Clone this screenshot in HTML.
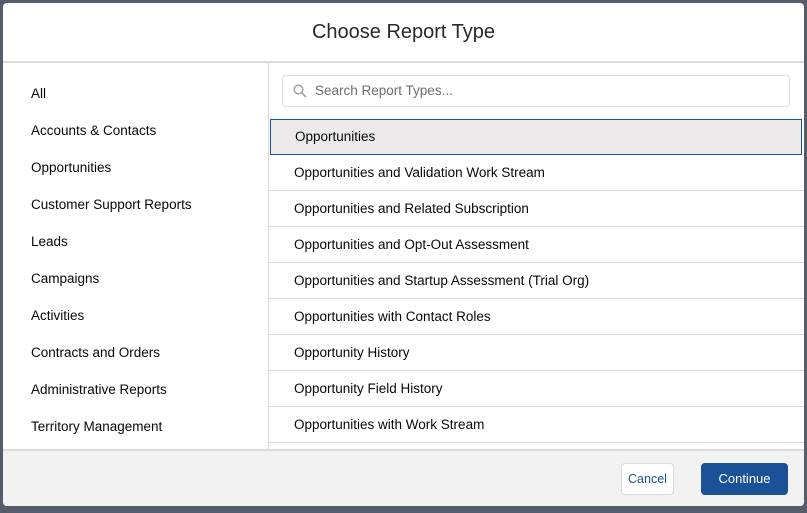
<!DOCTYPE html>
<html><head><style>
*{box-sizing:border-box;margin:0;padding:0}
body{width:807px;height:513px;background:#545d69;font-family:"Liberation Sans",sans-serif;color:#080707;position:relative;overflow:hidden}
.modal{position:absolute;left:3px;top:3px;width:801px;height:503px;background:#fff;border-radius:4px;overflow:hidden}
.hdr{height:60px;border-bottom:2px solid #dddbda;text-align:center;font-size:20px;line-height:58px;color:#2b2826}
.left{position:absolute;left:0;top:60px;width:266px;height:388px;border-right:1px solid #dddbda}
.left div{position:absolute;left:28px;font-size:13.5px}
.right{position:absolute;left:266px;top:60px;width:535px;height:388px;overflow:hidden}
.search{position:absolute;left:13px;top:12px;width:508px;height:32px;border:1px solid #dddbda;border-radius:4px;font-size:13.5px;color:#706e6b;line-height:30px;padding-left:32px}
.search svg{position:absolute;left:10px;top:8px}
.row{position:absolute;left:0;width:535px;height:36px;border-bottom:1px solid #dddbda;font-size:13.5px;line-height:35px;padding-left:25px}
.sel{background:#ecebea;border:1px solid #1b5297;left:1px;width:532px;padding-left:24px;line-height:33px}
.ftr{position:absolute;left:0;top:446px;width:801px;height:57px;background:#f3f2f2;border-top:2px solid #dddbda}
.btn{position:absolute;top:12px;height:32px;border-radius:4px;font-size:13px;line-height:30px;text-align:center}
</style></head><body>
<div class="modal">
<div class="hdr">Choose Report Type</div>
<div class="left">
<div style="top:23px">All</div>
<div style="top:60px">Accounts &amp; Contacts</div>
<div style="top:97px">Opportunities</div>
<div style="top:134px">Customer Support Reports</div>
<div style="top:171px">Leads</div>
<div style="top:208px">Campaigns</div>
<div style="top:245px">Activities</div>
<div style="top:282px">Contracts and Orders</div>
<div style="top:319px">Administrative Reports</div>
<div style="top:356px">Territory Management</div>
</div>
<div class="right">
<div class="search"><svg width="14" height="14" viewBox="0 0 14 14"><circle cx="5.5" cy="5.5" r="4.3" fill="none" stroke="#a8a6a4" stroke-width="1.6"/><path d="M8.7 8.7L13 13" stroke="#a8a6a4" stroke-width="1.8"/></svg>Search Report Types...</div>
<div class="row sel" style="top:56px">Opportunities</div>
<div class="row" style="top:92px">Opportunities and Validation Work Stream</div>
<div class="row" style="top:128px">Opportunities and Related Subscription</div>
<div class="row" style="top:164px">Opportunities and Opt-Out Assessment</div>
<div class="row" style="top:200px">Opportunities and Startup Assessment (Trial Org)</div>
<div class="row" style="top:236px">Opportunities with Contact Roles</div>
<div class="row" style="top:272px">Opportunity History</div>
<div class="row" style="top:308px">Opportunity Field History</div>
<div class="row" style="top:344px">Opportunities with Work Stream</div>
</div>
<div class="ftr">
<div class="btn" style="left:618px;width:53px;background:#fff;border:1px solid #dddbda;color:#1b5297;font-size:12.5px">Cancel</div>
<div class="btn" style="left:698px;width:87px;background:#1b5297;border:1px solid #1b5297;color:#fff">Continue</div>
</div>
</div>
</body></html>
